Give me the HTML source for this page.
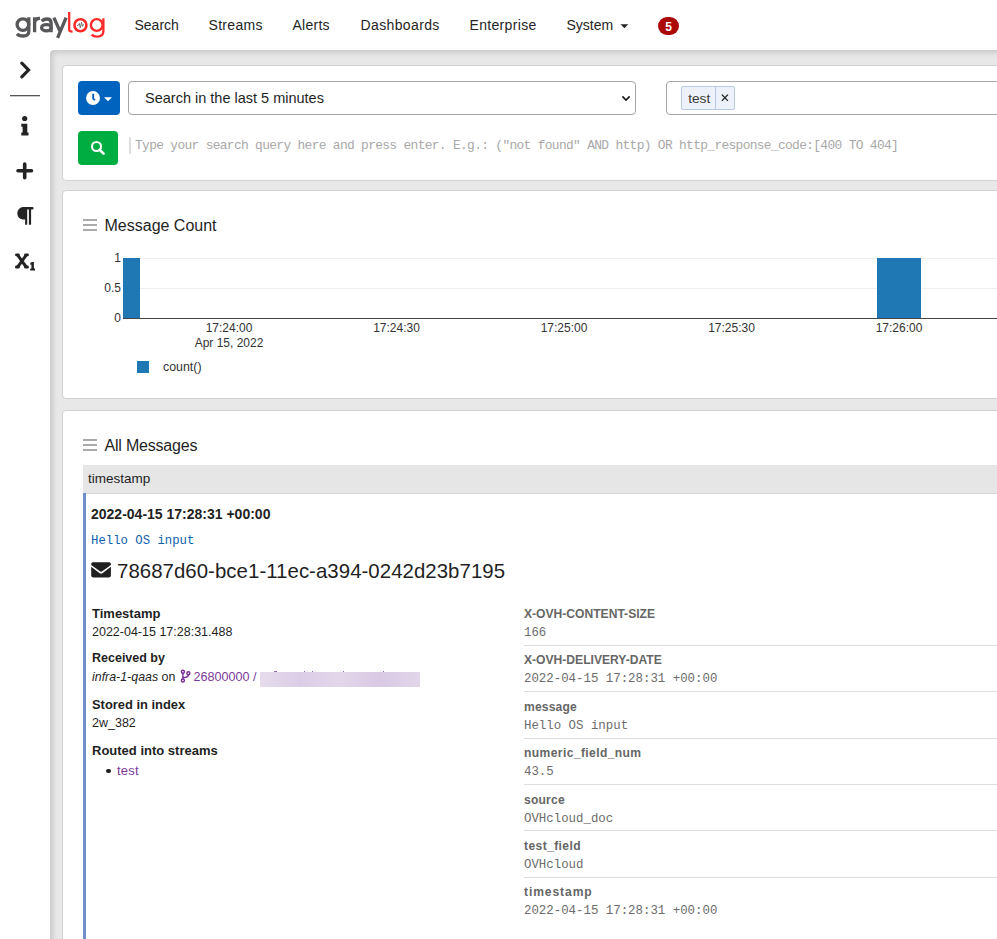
<!DOCTYPE html>
<html><head><meta charset="utf-8">
<style>
*{margin:0;padding:0;box-sizing:border-box}
html,body{width:997px;height:939px;overflow:hidden;background:#fff;font-family:"Liberation Sans",sans-serif;color:#1f1f1f}
.a{position:absolute;white-space:nowrap}
.nav{font-size:14px;line-height:14px;color:#252525;top:18px}
#content{position:absolute;left:50px;top:50px;width:960px;height:900px;background:#e8e8e8;border-top-left-radius:4px;box-shadow:inset 3px 3px 5px rgba(0,0,0,.13)}
.panel{position:absolute;background:#fff;border:1px solid #d2d2d2;border-radius:4px}
.mono{font-family:"Liberation Mono",monospace}
.ham{position:absolute;width:14px;height:12px}
.ham i{position:absolute;left:0;width:14px;height:2px;background:#aaa}
</style></head><body>

<!-- NAVBAR -->
<svg class="a" style="left:0;top:0" width="120" height="50" viewBox="0 0 120 50">
  <g fill="none" stroke="#58585a" stroke-width="3.3">
    <!-- g -->
    <circle cx="22.9" cy="24.6" r="5.8"/>
    <path d="M28.8 17.3 V31.5 Q28.8 36 23 36 Q19 36 17 33.8"/>
    <!-- r -->
    <path d="M34.6 32.3 V17.3 M34.6 22.5 Q35.5 18.2 40 18.4"/>
    <!-- a -->
    <path d="M41.6 21 Q44 19 47 19 Q51.1 19 51.1 23 V32.3"/>
    <ellipse cx="46.4" cy="27.7" rx="4.8" ry="3.1"/>
  </g>
  <path d="M53.9 17.6 L59.9 31.2 M66.1 17.6 L57.6 37.8" fill="none" stroke="#58585a" stroke-width="3.3"/>
  <g fill="none" stroke="#ff2b2b" stroke-width="2.3">
    <path d="M69.2 12 V29.5 Q69.2 31.6 72.6 31.6"/>
    <circle cx="80.45" cy="25.25" r="6" stroke-width="2.6"/>
    <circle cx="96.75" cy="25" r="5.85" stroke-width="2.4"/>
    <path d="M103.4 18.2 V31 Q103.4 36.6 97.2 36.6 Q93.6 36.6 91.6 34.6"/>
  </g>
  <path d="M77 25.5 L78.3 25.3 L79.3 23.4 L80.3 27.8 L81.5 22.4 L82.6 26.4 L83.6 24.3" fill="none" stroke="#6a6a6a" stroke-width="0.95" stroke-linejoin="round"/>
</svg>

<div class="a nav" style="left:134.5px">Search</div>
<div class="a nav" style="left:208.5px;letter-spacing:.3px">Streams</div>
<div class="a nav" style="left:292.5px;letter-spacing:.25px">Alerts</div>
<div class="a nav" style="left:360.5px;letter-spacing:.37px">Dashboards</div>
<div class="a nav" style="left:469.5px;letter-spacing:.33px">Enterprise</div>
<div class="a nav" style="left:566.5px">System</div>
<svg class="a" style="left:620px;top:24px" width="9" height="5"><path d="M0.5 0.3 H8.3 L4.4 4.2 Z" fill="#252525"/></svg>
<div class="a" style="left:658px;top:17px;width:21px;height:18px;border-radius:9px;background:#ac0909;color:#fff;font-weight:bold;font-size:12px;line-height:20px;text-align:center">5</div>

<!-- SIDEBAR -->
<svg class="a" style="left:0;top:50px" width="50" height="240">
  <path d="M21.8 13.2 L28.5 20 L21.8 26.8" fill="none" stroke="#232323" stroke-width="3.2" stroke-linecap="round" stroke-linejoin="miter"/>
  <rect x="10" y="45" width="30" height="1.3" fill="#555"/>
  <!-- info -->
  <circle cx="24.7" cy="68.5" r="2.6" fill="#232323"/>
  <path d="M21.3 73.7 H27.3 V82.6 H28.5 V85.6 H21.3 V82.6 H22.6 V76.7 H21.3 Z" fill="#232323"/>
  <!-- plus -->
  <path d="M24.7 114 V127.7 M18 120.8 H31.5" stroke="#232323" stroke-width="3.6" stroke-linecap="round"/>
  <!-- pilcrow -->
  <path d="M23 157.1 H32.3 Q33.6 157.1 33.6 158.3 Q33.6 159.5 32.3 159.5 H31.1 V174.5 Q31.1 174.8 30.8 174.8 H29.2 Q28.9 174.8 28.9 174.5 V159.5 H27.2 V174.5 Q27.2 174.8 26.9 174.8 H25.4 Q25.1 174.8 25.1 174.5 V169.5 H23 A5.7 6.2 0 0 1 23 157.1 Z" fill="#232323"/>
  <!-- subscript -->
  <g fill="#232323">
    <path d="M18.9 204.3 L27.4 216.1 L25 217.9 L16.5 206.1 Z"/>
    <path d="M25 204.3 L16.5 216.1 L18.9 217.9 L27.4 206.1 Z"/>
    <rect x="15.1" y="203.4" width="4.6" height="2.9" rx="1.2"/>
    <rect x="24.2" y="203.4" width="4.6" height="2.9" rx="1.2"/>
    <rect x="15.1" y="215.6" width="4.6" height="2.9" rx="1.2"/>
    <rect x="24.2" y="215.6" width="4.6" height="2.9" rx="1.2"/>
    <path d="M31.3 212.3 Q32.2 212.1 32.9 212.1 H33.9 V218.6 H35 V220.6 H30.2 V218.6 H31.4 V214.8 H30.3 V212.8 Z"/>
  </g>
</svg>

<!-- CONTENT -->
<div id="content"></div>

<div class="panel" style="left:62px;top:65px;width:1000px;height:116px"></div>
<div class="panel" style="left:62px;top:190px;width:1000px;height:209px"></div>
<div class="panel" style="left:62px;top:410px;width:1000px;height:600px"></div>


<!-- PANEL1 CONTENT -->
<div class="a" style="left:78px;top:81px;width:42px;height:34px;border-radius:4px;background:#0063be"></div>
<svg class="a" style="left:78px;top:81px" width="42" height="34">
  <circle cx="15" cy="17" r="6.95" fill="#fff"/>
  <path d="M15.2 12.8 V17.6 L16.9 19.1" stroke="#0063be" stroke-width="1.9" fill="none"/>
  <path d="M26 16.2 H34 L30 20.2 Z" fill="#fff"/>
</svg>
<div class="a" style="left:128px;top:81px;width:508px;height:34px;border:1px solid #a6a6a6;border-radius:4px;background:#fff"></div>
<div class="a" style="left:145px;top:91px;font-size:14.5px;line-height:14px;color:#1f1f1f">Search in the last 5 minutes</div>
<svg class="a" style="left:620px;top:93px" width="12" height="10"><path d="M2.4 3.4 L6 7.1 L9.7 3.4" stroke="#1a1a1a" stroke-width="1.6" fill="none"/></svg>
<div class="a" style="left:666px;top:81px;width:400px;height:34px;border:1px solid #a6a6a6;border-radius:4px;background:#fff"></div>
<div class="a" style="left:681px;top:86px;width:54px;height:24px;border:1px solid #b9cae8;border-radius:2px;background:#edf1f9"></div>
<div class="a" style="left:715px;top:86px;width:1px;height:24px;background:#b7c9e6"></div>
<div class="a" style="left:688.2px;top:92.2px;font-size:13.7px;line-height:14px;color:#3a3a3a">test</div>
<svg class="a" style="left:716px;top:88px" width="18" height="20"><path d="M5.9 6.6 L11.9 12.9 M11.9 6.6 L5.9 12.9" stroke="#222" stroke-width="1.35"/></svg>
<div class="a" style="left:78px;top:131px;width:40px;height:34px;border-radius:4px;background:#00ad41"></div>
<svg class="a" style="left:78px;top:131px" width="40" height="34">
  <circle cx="18.5" cy="15.5" r="4.5" stroke="#fff" stroke-width="2.1" fill="none"/>
  <path d="M21.6 18.8 L25.6 22.6" stroke="#fff" stroke-width="2.6" stroke-linecap="round"/>
</svg>
<div class="a" style="left:129px;top:137px;width:2px;height:17px;background:#dcdcdc"></div>
<div class="a mono" style="left:135px;top:140.2px;font-size:12.9px;line-height:12px;color:#a8a8a8;letter-spacing:-.67px">Type your search query here and press enter. E.g.: ("not found" AND http) OR http_response_code:[400 TO 404]</div>


<!-- PANEL2 CONTENT -->
<div class="ham" style="left:83px;top:219px"><i style="top:0"></i><i style="top:5px"></i><i style="top:10px"></i></div>
<div class="a" style="left:104.5px;top:218px;font-size:16px;line-height:16px;color:#1f1f1f">Message Count</div>
<div class="a" style="left:123px;top:258px;width:874px;height:1px;background:#eee"></div>
<div class="a" style="left:123px;top:288px;width:874px;height:1px;background:#eee"></div>
<div class="a" style="left:123px;top:258px;width:17px;height:60px;background:#1f77b4"></div>
<div class="a" style="left:877px;top:258px;width:44px;height:60px;background:#1f77b4"></div>
<div class="a" style="left:123px;top:318px;width:874px;height:1px;background:#444"></div>
<div class="a" style="left:80px;top:252px;width:41px;text-align:right;font-size:12px;line-height:12px;color:#333">1</div>
<div class="a" style="left:80px;top:281.5px;width:41px;text-align:right;font-size:12px;line-height:12px;color:#333">0.5</div>
<div class="a" style="left:80px;top:311.5px;width:41px;text-align:right;font-size:12px;line-height:12px;color:#333">0</div>
<div class="a" style="left:179px;top:321.5px;width:100px;text-align:center;font-size:12px;line-height:12px;color:#333">17:24:00</div>
<div class="a" style="left:179px;top:337px;width:100px;text-align:center;font-size:12px;line-height:12px;color:#333">Apr 15, 2022</div>
<div class="a" style="left:346.5px;top:321.5px;width:100px;text-align:center;font-size:12px;line-height:12px;color:#333">17:24:30</div>
<div class="a" style="left:514px;top:321.5px;width:100px;text-align:center;font-size:12px;line-height:12px;color:#333">17:25:00</div>
<div class="a" style="left:681.5px;top:321.5px;width:100px;text-align:center;font-size:12px;line-height:12px;color:#333">17:25:30</div>
<div class="a" style="left:849px;top:321.5px;width:100px;text-align:center;font-size:12px;line-height:12px;color:#333">17:26:00</div>
<div class="a" style="left:137px;top:361px;width:12px;height:12px;background:#1f77b4"></div>
<div class="a" style="left:163px;top:361px;font-size:12.4px;line-height:12px;color:#333">count()</div>


<!-- PANEL3 CONTENT -->
<div class="ham" style="left:83px;top:439px"><i style="top:0"></i><i style="top:5px"></i><i style="top:10px"></i></div>
<div class="a" style="left:104.5px;top:438px;font-size:16px;line-height:16px;color:#1f1f1f;letter-spacing:-.2px">All Messages</div>
<div class="a" style="left:83px;top:465px;width:914px;height:28px;background:#e6e6e6"></div><div class="a" style="left:83px;top:493px;width:914px;height:1px;background:#d7d7d7"></div>
<div class="a" style="left:88px;top:472px;font-size:13.5px;line-height:14px;color:#1f1f1f">timestamp</div>
<div class="a" style="left:83px;top:493px;width:3px;height:446px;background:#6f8fcc"></div>
<div class="a" style="left:91px;top:507px;font-size:14px;line-height:14px;font-weight:bold;color:#1f1f1f">2022-04-15 17:28:31 +00:00</div>
<div class="a mono" style="left:91px;top:535px;font-size:12.3px;line-height:12px;color:#0f62b0">Hello OS input</div>
<svg class="a" style="left:91px;top:562px" width="21" height="16">
  <path d="M0.2 1.9 Q0.2 0.3 1.9 0.3 H18.2 Q19.9 0.3 19.9 1.9 V2.9 L11.6 9.1 Q10 10.2 8.5 9.1 L0.2 2.9 Z" fill="#1f1f1f"/>
  <path d="M0.2 4.8 L8.4 11 Q10 12.2 11.7 11 L19.9 4.8 V13.6 Q19.9 15.4 18.1 15.4 H2 Q0.2 15.4 0.2 13.6 Z" fill="#1f1f1f"/>
</svg>
<div class="a" style="left:117px;top:561px;font-size:20.4px;line-height:20px;color:#1f1f1f;letter-spacing:.05px">78687d60-bce1-11ec-a394-0242d23b7195</div>


<!-- LEFT DETAILS -->
<div class="a" style="left:92px;top:607px;font-size:13px;line-height:13px;font-weight:bold;color:#1f1f1f">Timestamp</div>
<div class="a" style="left:92px;top:626px;font-size:12.5px;line-height:13px;color:#1f1f1f">2022-04-15 17:28:31.488</div>
<div class="a" style="left:92px;top:652px;font-size:12.5px;line-height:13px;font-weight:bold;color:#1f1f1f">Received by</div>
<div class="a" style="left:92px;top:671px;font-size:12.4px;line-height:13px;color:#1f1f1f"><i>infra-1-qaas</i> on</div>
<svg class="a" style="left:176px;top:666px" width="24" height="20">
  <g fill="none" stroke="#7b2f9a" stroke-width="1.4">
    <circle cx="6.9" cy="5.7" r="1.5"/><circle cx="6.9" cy="14.5" r="1.5"/><circle cx="12.4" cy="7.3" r="1.5"/>
    <path d="M6.9 7 V13.2 M12.4 8.8 Q12.4 11.6 6.9 11.6"/>
  </g>
</svg>
<div class="a" style="left:193.5px;top:671px;font-size:12.6px;line-height:13px;color:#7b3a99">26800000 /</div>
<div class="a" style="left:260px;top:672px;width:160px;height:14.5px;background:linear-gradient(90deg,#e6dcec 0%,#dccde6 25%,#e3d6ea 50%,#d9c9e3 75%,#e2d6ea 100%)"></div>
<div class="a" style="left:274px;top:670.8px;width:3px;height:1.2px;background:#9560b0"></div><div class="a" style="left:304px;top:670.8px;width:1.3px;height:1.2px;background:#9560b0"></div><div class="a" style="left:312px;top:670.8px;width:1.3px;height:1.2px;background:#9560b0"></div><div class="a" style="left:343px;top:670.8px;width:1.3px;height:1.2px;background:#9560b0"></div><div class="a" style="left:383.2px;top:670.8px;width:1.3px;height:1.2px;background:#9560b0"></div>
<div class="a" style="left:92px;top:698px;font-size:12.9px;line-height:13px;font-weight:bold;color:#1f1f1f">Stored in index</div>
<div class="a" style="left:92px;top:717px;font-size:12.5px;line-height:13px;color:#1f1f1f">2w_382</div>
<div class="a" style="left:92px;top:744px;font-size:13px;line-height:13px;font-weight:bold;color:#1f1f1f">Routed into streams</div>
<div class="a" style="left:106.2px;top:768.6px;width:4.4px;height:4.4px;border-radius:2.2px;background:#1f1f1f"></div>
<div class="a" style="left:117px;top:764px;font-size:13px;letter-spacing:.2px;line-height:13px;color:#7b3a99">test</div>

<!-- RIGHT DETAILS -->
<div class="a" style="left:524px;top:607.9px;font-size:12.1px;line-height:12px;font-weight:bold;color:#666">X-OVH-CONTENT-SIZE</div>
<div class="a mono" style="left:524px;top:627.0px;font-size:12.4px;line-height:12px;color:#6c6c6c">166</div>
<div class="a" style="left:524px;top:645px;width:473px;height:1px;background:#ddd"></div>
<div class="a" style="left:524px;top:654.3px;font-size:12.1px;line-height:12px;font-weight:bold;color:#666">X-OVH-DELIVERY-DATE</div>
<div class="a mono" style="left:524px;top:673.4px;font-size:12.4px;line-height:12px;color:#6c6c6c">2022-04-15 17:28:31 +00:00</div>
<div class="a" style="left:524px;top:691px;width:473px;height:1px;background:#ddd"></div>
<div class="a" style="left:524px;top:700.7px;font-size:12.1px;line-height:12px;font-weight:bold;color:#666;letter-spacing:0.17px">message</div>
<div class="a mono" style="left:524px;top:719.8px;font-size:12.4px;line-height:12px;color:#6c6c6c">Hello OS input</div>
<div class="a" style="left:524px;top:738px;width:473px;height:1px;background:#ddd"></div>
<div class="a" style="left:524px;top:747.1px;font-size:12.1px;line-height:12px;font-weight:bold;color:#666;letter-spacing:0.39px">numeric_field_num</div>
<div class="a mono" style="left:524px;top:766.2px;font-size:12.4px;line-height:12px;color:#6c6c6c">43.5</div>
<div class="a" style="left:524px;top:784px;width:473px;height:1px;background:#ddd"></div>
<div class="a" style="left:524px;top:793.5px;font-size:12.1px;line-height:12px;font-weight:bold;color:#666;letter-spacing:0.2px">source</div>
<div class="a mono" style="left:524px;top:812.6px;font-size:12.4px;line-height:12px;color:#6c6c6c">OVHcloud_doc</div>
<div class="a" style="left:524px;top:830px;width:473px;height:1px;background:#ddd"></div>
<div class="a" style="left:524px;top:839.9px;font-size:12.1px;line-height:12px;font-weight:bold;color:#666;letter-spacing:0.39px">test_field</div>
<div class="a mono" style="left:524px;top:859.0px;font-size:12.4px;line-height:12px;color:#6c6c6c">OVHcloud</div>
<div class="a" style="left:524px;top:877px;width:473px;height:1px;background:#ddd"></div>
<div class="a" style="left:524px;top:886.3px;font-size:12.1px;line-height:12px;font-weight:bold;color:#666;letter-spacing:0.9px">timestamp</div>
<div class="a mono" style="left:524px;top:905.4px;font-size:12.4px;line-height:12px;color:#6c6c6c">2022-04-15 17:28:31 +00:00</div>

</body></html>
